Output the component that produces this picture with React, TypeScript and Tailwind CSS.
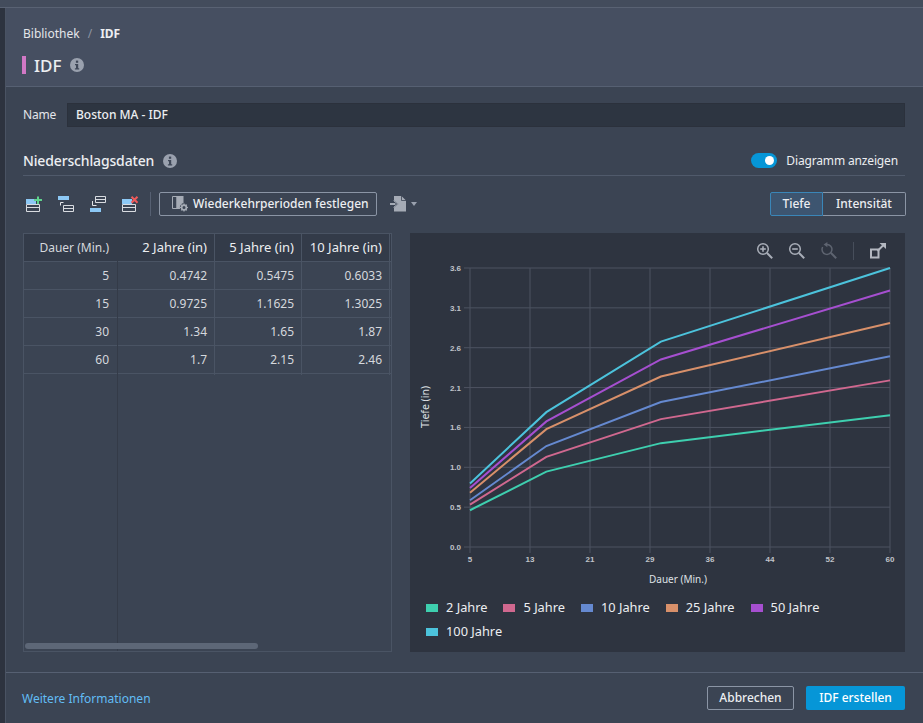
import { ReactNode } from 'react';

const columns = [
  { title: 'Dauer (Min.)', width: 'w-[94px]', values: ['5', '15', '30', '60'] },
  { title: '2 Jahre (in)', width: 'w-[97px]', values: ['0.4742', '0.9725', '1.34', '1.7'] },
  { title: '5 Jahre (in)', width: 'w-[87px]', values: ['0.5475', '1.1625', '1.65', '2.15'] },
  { title: '10 Jahre (in)', width: 'w-[88px]', values: ['0.6033', '1.3025', '1.87', '2.46'] },
];

const series = [
  { name: '2 Jahre', color: '#3ecfaf', swatch: 'bg-[#3ecfaf]', values: [0.4742, 0.9725, 1.34, 1.7] },
  { name: '5 Jahre', color: '#d0688f', swatch: 'bg-[#d0688f]', values: [0.5475, 1.1625, 1.65, 2.15] },
  { name: '10 Jahre', color: '#6589d0', swatch: 'bg-[#6589d0]', values: [0.6033, 1.3025, 1.87, 2.46] },
  { name: '25 Jahre', color: '#d8906a', swatch: 'bg-[#d8906a]', values: [0.7, 1.52, 2.2, 2.89] },
  { name: '50 Jahre', color: '#a64fd0', swatch: 'bg-[#a64fd0]', values: [0.76, 1.62, 2.42, 3.31] },
  { name: '100 Jahre', color: '#4cc3dc', swatch: 'bg-[#4cc3dc]', values: [0.82, 1.74, 2.65, 3.6] },
];

const durations = [5, 15, 30, 60];
const yTicks = ['0.0', '0.5', '1.0', '1.6', '2.1', '2.6', '3.1', '3.6'];
const xTicks = ['5', '13', '21', '29', '36', '44', '52', '60'];

// plot area inside the chart svg
const left = 60;
const right = 480;
const top = 8;
const bottom = 287;

const xPos = (min: number) => left + ((min - 5) * (right - left)) / 55;
const yPos = (v: number) => bottom - (v * (bottom - top)) / 3.6;

const InfoIcon = () => (
  <svg width="14" height="14" viewBox="0 0 14 14">
    <circle cx="7" cy="7" r="7" fill="#9aa1ae" />
    <rect x="5.9" y="2.6" width="2.3" height="2.2" fill="#3f4858" />
    <path d="M5 6h3.2v4.2H9.2v1.2H4.9v-1.2H6V7.2H5z" fill="#3f4858" />
  </svg>
);

const AddRowIcon = () => (
  <svg width="17" height="17" viewBox="0 0 17 17">
    <rect x="0" y="3" width="10" height="5" fill="#8cc8f5" />
    <path d="M0.5 8.5h13v7h-13zM0.5 11.5h13" fill="none" stroke="#d9dce1" strokeWidth="1" />
    <path d="M12 0.5v7.5M8 4h8" stroke="#5fd38d" strokeWidth="2" />
  </svg>
);

const InsertAboveIcon = () => (
  <svg width="17" height="17" viewBox="0 0 17 17">
    <rect x="0" y="0" width="11" height="4" fill="#8cc8f5" />
    <path d="M2.5 9.5V6.5h3" fill="none" stroke="#e4e6ea" strokeWidth="1" />
    <path d="M5.5 9.5h10v6h-10zM5.5 12.5h10" fill="none" stroke="#d9dce1" strokeWidth="1" />
  </svg>
);

const InsertBelowIcon = () => (
  <svg width="17" height="17" viewBox="0 0 17 17">
    <path d="M5.5 0.5h10v6h-10zM5.5 3.5h10" fill="none" stroke="#d9dce1" strokeWidth="1" />
    <path d="M2.5 5v4.5h4" fill="none" stroke="#e4e6ea" strokeWidth="1" />
    <rect x="0" y="12" width="11" height="4" fill="#8cc8f5" />
  </svg>
);

const DeleteRowIcon = () => (
  <svg width="17" height="17" viewBox="0 0 17 17">
    <rect x="0" y="3" width="10" height="5" fill="#8cc8f5" />
    <path d="M0.5 8.5h13v7h-13zM0.5 11.5h13" fill="none" stroke="#d9dce1" strokeWidth="1" />
    <path d="M9.5 0.8l6 6M15.5 0.8l-6 6" stroke="#ef5a5a" strokeWidth="2" />
  </svg>
);

const PeriodsIcon = () => (
  <svg width="17" height="16" viewBox="0 0 17 16">
    <path d="M0.5 0.5h4.5v12h-4.5z" fill="none" stroke="#a5abb5" strokeWidth="1" />
    <path d="M4.5 0h7v7a5 5 0 0 0-3.5 6h-3.5z" fill="#a5abb5" />
    <circle cx="12" cy="11.5" r="2.4" fill="none" stroke="#a5abb5" strokeWidth="1.8" />
    <path d="M12 7.5v1.4M12 14.1v1.4M8 11.5h1.4M14.6 11.5h1.4M9.2 8.7l1 1M13.8 13.3l1 1M14.8 8.7l-1 1M10.2 13.3l-1 1" stroke="#a5abb5" strokeWidth="1.2" />
  </svg>
);

const ExportIcon = () => (
  <svg width="17" height="16" viewBox="0 0 17 16">
    <path d="M4 0h7.5L16 4.5V15.5H4V11.6L8.4 8 4 4.4z" fill="#a5abb5" />
    <path d="M11.5 0v4.5H16" fill="none" stroke="#3b4453" strokeWidth="0.8" />
    <path d="M0 7h5.4v2H0z" fill="#a5abb5" />
    <path d="M3.6 4.6L7.8 8 3.6 11.4" fill="none" stroke="#a5abb5" strokeWidth="1" />
  </svg>
);

const ZoomIcon = ({ kind, dim }: { kind: 'in' | 'out' | 'reset'; dim?: boolean }) => {
  const color = dim ? '#5e6470' : '#a9aeb8';
  return (
    <svg width="17" height="17" viewBox="0 0 17 17" fill="none" stroke={color}>
      {kind === 'reset' ? (
        <>
          <path d="M7 2.4a5 5 0 1 1-4.4 2.6" strokeWidth="1.5" />
          <path d="M7.4 0L3.6 2.6 7.4 5.2z" fill={color} stroke="none" />
        </>
      ) : (
        <circle cx="7" cy="7" r="5.3" strokeWidth="1.5" />
      )}
      <path d="M11 11l5.2 5.2" strokeWidth="2" />
      {kind !== 'reset' && <path d="M4.2 7h5.6" strokeWidth="1.6" />}
      {kind === 'in' && <path d="M7 4.2v5.6" strokeWidth="1.6" />}
    </svg>
  );
};

const ExpandIcon = () => (
  <svg width="16" height="16" viewBox="0 0 16 16" fill="none" stroke="#b3b7c0">
    <rect x="1" y="6.5" width="7.5" height="8" strokeWidth="2" />
    <path d="M7.5 8l6-6" strokeWidth="2" />
    <path d="M9.5 0H16v6z" fill="#b3b7c0" stroke="none" />
  </svg>
);

const ToolbarButton = ({ children }: { children: ReactNode }) => (
  <button className="flex w-[32px] justify-start">{children}</button>
);

const Chart = () => (
  <svg width="495" height="335" viewBox="0 0 495 335" className="block">
    {yTicks.map((label, i) => {
      const y = bottom - (i * (bottom - top)) / 7;
      return (
        <g key={label}>
          <line x1={left - 6} x2={right} y1={y} y2={y} stroke="#4d5361" strokeWidth="1" />
          <text x={left - 9} y={y + 3} textAnchor="end" fontSize="8" fontWeight="700" fill="#c0c3c9" fontFamily="Liberation Sans">
            {label}
          </text>
        </g>
      );
    })}
    {xTicks.map((label, i) => {
      const x = left + (i * (right - left)) / 7;
      return (
        <g key={label}>
          <line x1={x} x2={x} y1={top} y2={bottom + 6} stroke="#4d5361" strokeWidth="1" />
          <text x={x} y={bottom + 15} textAnchor="middle" fontSize="8" fontWeight="700" fill="#c0c3c9" fontFamily="Liberation Sans">
            {label}
          </text>
        </g>
      );
    })}
    {series.map((s) => (
      <polyline
        key={s.name}
        fill="none"
        stroke={s.color}
        strokeWidth="2"
        points={s.values.map((v, i) => `${xPos(durations[i])},${yPos(v)}`).join(' ')}
      />
    ))}
    <text x="268" y="323" textAnchor="middle" fontSize="10" fill="#dfe1e5" fontFamily="Noto Sans">
      Dauer (Min.)
    </text>
    <text x="19" y="147" textAnchor="middle" fontSize="10.5" fill="#dfe1e5" fontFamily="Noto Sans" transform="rotate(-90 19 147)">
      Tiefe (in)
    </text>
  </svg>
);

export default function App() {
  return (
    <div className="flex h-[723px] w-[923px] flex-col overflow-hidden bg-[#2d333f] font-['Noto_Sans',sans-serif] text-[12px] text-[#eceef1]">
      {/* oberer Rand */}
      <div className="h-[8px] shrink-0 border-b border-[#596273] bg-[#434c5c]" />

      <div className="flex min-h-0 flex-1">
        <div className="w-[6px] shrink-0 border-r border-[#4a5363] bg-[#2d333f]" />

        <div className="flex min-w-0 flex-1 flex-col bg-[#3b4453]">
          {/* HEADER */}
          <div className="h-[79px] shrink-0 border-b border-[#566072] bg-[#464f61] pl-[17px] pt-[18px]">
            <div className="flex h-[16px] items-center leading-none">
              <span className="text-[#e4e6ea]">Bibliothek</span>
              <span className="mx-[8px] text-[#8d94a1]">/</span>
              <span className="font-bold">IDF</span>
            </div>
            <div className="ml-[-1px] mt-[14px] flex h-[18px] items-center">
              <div className="h-[18px] w-[4px] bg-[#d178c5]" />
              <span className="ml-[8px] text-[17px] leading-none font-medium">IDF</span>
              <span className="ml-[9px] flex"><InfoIcon /></span>
            </div>
          </div>

          {/* FORMULAR */}
          <div className="flex min-h-0 flex-1 flex-col pl-[17px] pr-[18px]">
            <div className="mt-[16px] flex h-[24px] items-center">
              <span className="w-[44px] tracking-[-0.2px] text-[#e4e6ea]">Name</span>
              <div className="flex h-[24px] flex-1 items-center border border-[#2b313c] bg-[#2d3541] pl-[8px] font-medium">Boston MA - IDF</div>
            </div>

            <div className="mt-[23px] flex h-[26px] items-center justify-between border-b border-[#505a6b] pb-[4px]">
              <div className="flex items-center">
                <span className="text-[14px] tracking-[-0.15px] font-medium">Niederschlagsdaten</span>
                <span className="ml-[9px] flex"><InfoIcon /></span>
              </div>
              <div className="flex items-center pr-[7px]">
                <div className="flex h-[15px] w-[26px] items-center justify-end rounded-full bg-[#0696d7] pr-[3px]">
                  <div className="h-[9px] w-[9px] rounded-full bg-white" />
                </div>
                <span className="ml-[9px] tracking-[-0.15px] text-[#eceef1]">Diagramm anzeigen</span>
              </div>
            </div>

            {/* TOOLBAR */}
            <div className="mt-[16px] flex h-[24px] items-center">
              <div className="flex pl-[3px]">
                <ToolbarButton><AddRowIcon /></ToolbarButton>
                <ToolbarButton><InsertAboveIcon /></ToolbarButton>
                <ToolbarButton><InsertBelowIcon /></ToolbarButton>
                <ToolbarButton><DeleteRowIcon /></ToolbarButton>
              </div>
              <div className="ml-[-4px] h-[24px] w-px bg-[#566072]" />
              <button className="ml-[8px] flex h-[24px] w-[218px] items-center rounded-[2px] border border-[#8b95a5] pl-[12px] font-medium">
                <PeriodsIcon />
                <span className="ml-[4px]">Wiederkehrperioden festlegen</span>
              </button>
              <div className="ml-[13px] flex items-center">
                <ExportIcon />
                <div className="ml-[4px] h-0 w-0 border-x-[3.5px] border-t-[4px] border-x-transparent border-t-[#9aa1ae]" />
              </div>
              <div className="ml-auto mr-[-1px] flex h-[24px] font-medium">
                <div className="flex w-[53px] items-center justify-center rounded-l-[2px] border border-[#3a86b8] bg-[#3d5570]">Tiefe</div>
                <div className="flex w-[83px] items-center justify-center rounded-r-[2px] border border-l-0 border-[#8b95a5]">Intensität</div>
              </div>
            </div>

            {/* TABELLE + DIAGRAMM */}
            <div className="mt-[17px] flex h-[419px] gap-[18px]">
              <div className="relative flex w-[369px] overflow-hidden border border-[#4a5464] bg-[#3b4453]">
                {columns.map((col, i) => (
                  <div key={col.title} className={`${col.width} shrink-0 border-r ${i === 0 ? 'border-[#343b48]' : 'h-[141px] border-[#4a5464]'}`}>
                    <div className={`flex h-[28px] items-center justify-end border-b border-[#4a5464] bg-[#333b49] ${i === 0 ? 'pr-[8px] text-[#d5d8dd]' : 'pr-[7px] text-[13px] text-[#eceef1]'}`}>
                      {col.title}
                    </div>
                    {col.values.map((v) => (
                      <div key={v} className={`flex h-[28px] items-center justify-end border-b border-[#4a5464] text-[#d5d8dd] ${i === 0 ? 'pr-[8px]' : 'pr-[7px]'}`}>
                        {v}
                      </div>
                    ))}
                  </div>
                ))}
                <div className="flex-1">
                  <div className="h-[28px] border-b border-[#4a5464] bg-[#333b49]" />
                  {columns[0].values.map((v) => (
                    <div key={v} className="h-[28px] border-b border-[#4a5464]" />
                  ))}
                </div>
                <div className="absolute bottom-[2px] left-[1px] h-[6px] w-[233px] rounded-full bg-[#5d6777]" />
              </div>

              <div className="flex w-[495px] flex-col bg-[#2e3440]">
                <div className="flex h-[27px] shrink-0 items-center justify-end pr-[19px] pt-[8px]">
                  <ZoomIcon kind="in" />
                  <span className="ml-[15px] flex"><ZoomIcon kind="out" /></span>
                  <span className="ml-[15px] flex"><ZoomIcon kind="reset" dim /></span>
                  <div className="ml-[16px] h-[18px] w-px bg-[#474e5b]" />
                  <span className="ml-[16px] flex"><ExpandIcon /></span>
                </div>
                <Chart />
                <div className="mt-[4px] flex flex-wrap gap-x-[16px] gap-y-[6px] pl-[16px] pr-[20px] text-[12.8px] text-[#eceef1]">
                  {series.map((s) => (
                    <div key={s.name} className="flex h-[18px] items-center">
                      <div className={`h-[8px] w-[12px] ${s.swatch}`} />
                      <span className="ml-[8px]">{s.name}</span>
                    </div>
                  ))}
                </div>
              </div>
            </div>

            <div className="flex-1" />
          </div>

          {/* FOOTER */}
          <div className="flex h-[51px] shrink-0 items-center justify-between border-t border-[#566072] pl-[16px] pr-[18px]">
            <a className="pt-[1px] text-[#62bdf5]">Weitere Informationen</a>
            <div className="flex gap-[12px] font-medium">
              <button className="h-[24px] w-[87px] rounded-[2px] border border-[#8b95a5]">Abbrechen</button>
              <button className="h-[24px] w-[99px] rounded-[2px] bg-[#0696d7] text-white">IDF erstellen</button>
            </div>
          </div>
        </div>
      </div>
    </div>
  );
}
